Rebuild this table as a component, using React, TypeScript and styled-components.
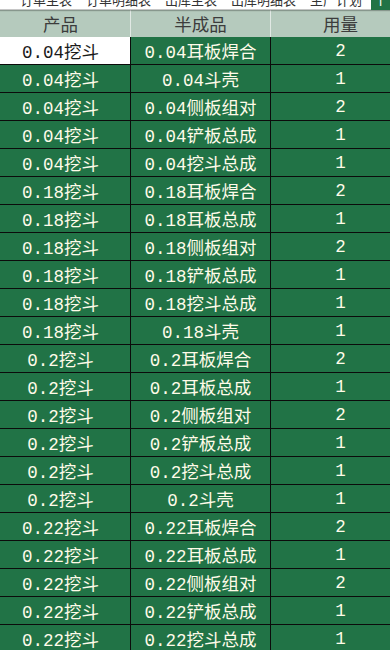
import { FC } from "react";
import styled, { createGlobalStyle } from "styled-components";

const GlobalStyle = createGlobalStyle`
  html, body {
    margin: 0;
    padding: 0;
    overflow: hidden;
    background: #217346;
  }
`;

const Page = styled.div`
  width: 390px;
  height: 650px;
  overflow: hidden;
  display: flex;
  flex-direction: column;
`;

const TabBar = styled.div`
  height: 10px;
  display: flex;
  flex-shrink: 0;
  box-shadow: 0 1px 1px rgba(0, 0, 0, 0.25);
  position: relative;
  z-index: 1;
`;

const TabStrip = styled.div`
  flex: 1;
  display: flex;
  align-items: flex-end;
  padding: 0 0 3px 13px;
  background: #ffffff;
  overflow: hidden;
  border-bottom: 1px solid #c6c6c6;
`;

const Tab = styled.span`
  flex-shrink: 0;
  padding: 0 7px;
  font:
    400 13px/13px "Noto Sans CJK SC",
    sans-serif;
  color: #333333;
  white-space: nowrap;
`;

const ActiveTab = styled.div`
  width: 19px;
  display: flex;
  align-items: flex-end;
  justify-content: center;
  padding-bottom: 3px;
  background: #217346;
  color: #ffffff;
  overflow: hidden;
  font:
    400 12px/12px "Noto Sans CJK SC",
    sans-serif;
`;

const Sheet = styled.div`
  margin-left: -9px;
  display: flex;
  flex-direction: column;
`;

const Row = styled.div`
  display: grid;
  grid-template-columns: 140px 140px 140px;
`;

const HeaderCell = styled.div`
  height: 27px;
  box-sizing: border-box;
  display: flex;
  align-items: center;
  justify-content: center;
  background: #b5cabd;
  border-right: 1px solid #e1e9e4;
  color: #3c3c3c;
  font:
    400 17.5px "Noto Sans CJK SC",
    sans-serif;
`;

const Cell = styled.div<{ $selected?: boolean }>`
  height: 28px;
  box-sizing: border-box;
  display: flex;
  align-items: center;
  justify-content: center;
  white-space: nowrap;
  background: ${(p) => (p.$selected ? "#ffffff" : "#217346")};
  color: ${(p) => (p.$selected ? "#1a1a1a" : "#fffbe9")};
  border-right: 1px solid #0b0b0b;
  border-bottom: 1px solid #0b0b0b;
  font:
    400 17.5px "Liberation Mono",
    "Noto Sans CJK SC",
    monospace;
`;

const tabs = ["订单主表", "订单明细表", "出库主表", "出库明细表", "生产计划"];

const parts: [string, string, number][] = [
  ["0.04", "耳板焊合", 2],
  ["0.04", "斗壳", 1],
  ["0.04", "侧板组对", 2],
  ["0.04", "铲板总成", 1],
  ["0.04", "挖斗总成", 1],
  ["0.18", "耳板焊合", 2],
  ["0.18", "耳板总成", 1],
  ["0.18", "侧板组对", 2],
  ["0.18", "铲板总成", 1],
  ["0.18", "挖斗总成", 1],
  ["0.18", "斗壳", 1],
  ["0.2", "耳板焊合", 2],
  ["0.2", "耳板总成", 1],
  ["0.2", "侧板组对", 2],
  ["0.2", "铲板总成", 1],
  ["0.2", "挖斗总成", 1],
  ["0.2", "斗壳", 1],
  ["0.22", "耳板焊合", 2],
  ["0.22", "耳板总成", 1],
  ["0.22", "侧板组对", 2],
  ["0.22", "铲板总成", 1],
  ["0.22", "挖斗总成", 1],
];

const App: FC = () => {
  return (
    <Page>
      <GlobalStyle />
      <TabBar>
        <TabStrip>
          {tabs.map((t) => (
            <Tab key={t}>{t}</Tab>
          ))}
        </TabStrip>
        <ActiveTab>T</ActiveTab>
      </TabBar>
      <Sheet>
        <Row>
          <HeaderCell>产品</HeaderCell>
          <HeaderCell>半成品</HeaderCell>
          <HeaderCell>用量</HeaderCell>
        </Row>
        {parts.map(([size, part, qty], i) => (
          <Row key={i}>
            <Cell $selected={i === 0}>{size}挖斗</Cell>
            <Cell>
              {size}
              {part}
            </Cell>
            <Cell>{qty}</Cell>
          </Row>
        ))}
      </Sheet>
    </Page>
  );
};

export default App;
